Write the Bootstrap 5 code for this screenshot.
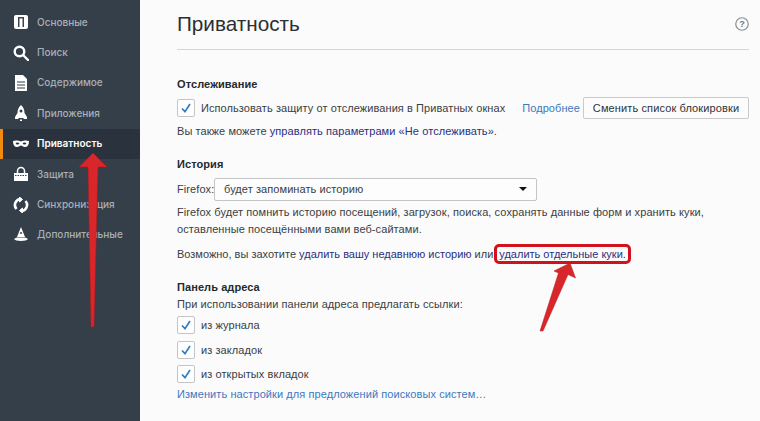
<!DOCTYPE html>
<html lang="ru">
  <head>
    <meta charset="UTF-8" />
    <meta name="viewport" content="width=device-width, initial-scale=1" />
    <title>Приватность</title>
    <link
      href="https://cdn.jsdelivr.net/npm/bootstrap@5.3.0/dist/css/bootstrap.min.css"
      rel="stylesheet"
    />
    <style>
      html, body { height: 421px; overflow: hidden; }
      body { background: #fbfbfc; color: #3a3e43; font-family: "Liberation Sans", Arial, sans-serif; font-size: 11px; letter-spacing: .08px; position: relative; white-space: nowrap; }
      .side-panel { width: 140px; height: 421px; background: #343f4a; padding-top: 7px; flex-shrink: 0; }
      .side-item { height: 30.4px; padding-left: 13px; gap: 8px; color: #a9afb5; font-family: Inter, sans-serif; font-size: 10px; font-weight: 500; letter-spacing: 0; }
      .side-item svg { width: 16px; height: 16px; flex-shrink: 0; }
      .side-item.is-active { background: #2a333d; color: #fff; font-weight: 600; border-left: 3px solid #f28a10; padding-left: 10px; }
      .main-pane { padding: 0 11px 0 37px; min-width: 0; }
      .page-head { height: 50px; padding-top: 9px; border-bottom: 1px solid #d5d6d8; }
      .page-head h1 { font-size: 20.7px; font-weight: 400; margin: 0; line-height: 30px; color: #2b2f33; letter-spacing: 0; }
      .help-mark { width: 14px; height: 14px; margin-top: 8px; }
      .sect-title { font-size: 11px; font-weight: 700; margin: 0; line-height: 16px; color: #26292d; }
      .track-gap { margin-top: 26px; }
      .history-gap { margin-top: 16.5px; }
      .addr-gap { margin-top: 15px; }
      .addr-intro { margin-top: 1px; }
      .line-row { line-height: 17px; }
      .tick-box { width: 18px; height: 18px; border: 1px solid #c4c5c7; border-radius: 2px; background: #fff; flex-shrink: 0; }
      .tick-box svg { width: 12px; height: 12px; }
      .tick-row { gap: 6px; height: 24.5px; }
      .track-row { margin-top: 4px; margin-bottom: 2px; }
      .more-link { color: #3b78c0; text-decoration: none; }
      .dark-link { color: #2a2f80; text-decoration: none; }
      .block-btn { font-size: 11px; letter-spacing: .12px; width: 166px; height: 22px; padding: 0; background: #fcfcfc; border: 1px solid #c9c9cb; border-radius: 2px; color: #2f3338; line-height: 20px; margin-left: -3px; flex-shrink: 0; }
      .select-row { margin-top: 5.5px; margin-bottom: 3px; }
      .select-label { width: 37px; }
      .hist-select { width: 323px; height: 23px; background: #fdfdfd; border: 1px solid #c4c5c7; border-radius: 2px; padding: 0 9px; }
      .caret-mark { width: 0; height: 0; border-left: 4px solid transparent; border-right: 4px solid transparent; border-top: 4px solid #111; }
      .cookie-line { margin-top: 6.5px; height: 20px; letter-spacing: 0; }
      .red-frame { border: 3px solid #d0121f; border-radius: 5px; padding: 0 2px; margin-left: 1px; line-height: 14px; }
      .change-link { margin-top: -1px; }
      .arrow-layer { position: absolute; left: 0; top: 0; width: 760px; height: 421px; pointer-events: none; }
    </style>
  </head>
  <body>
    <div class="d-flex">
      <nav class="side-panel">
        <div class="side-item d-flex align-items-center">
          <svg viewBox="0 0 16 16"><rect x="1" y="1" width="14" height="14" rx="2" fill="#fff"/><rect x="5" y="3" width="6" height="10" fill="#3b4550"/><rect x="6.500" y="4.500" width="3" height="8.500" fill="#fff"/></svg>
          <span>Основные</span>
        </div>
        <div class="side-item d-flex align-items-center">
          <svg viewBox="0 0 16 16" fill="none" stroke="#fff" stroke-width="2.400"><circle cx="6.500" cy="6.500" r="4.800"/><path d="M10 10l5 5" stroke-linecap="round"/></svg>
          <span>Поиск</span>
        </div>
        <div class="side-item d-flex align-items-center">
          <svg viewBox="0 0 16 16"><path d="M2 0h8l4 4v12H2z" fill="#fff"/><path d="M4 7h8M4 10h8M4 13h8" stroke="#343f4a" stroke-width="1.200"/></svg>
          <span>Содержимое</span>
        </div>
        <div class="side-item d-flex align-items-center">
          <svg viewBox="0 0 16 16"><path d="M8 0c2.500 2 3.500 5 3.500 8l2.500 4v2h-3l-1-1H6l-1 1H2v-2l2.500-4C4.500 5 5.500 2 8 0z" fill="#fff"/><circle cx="8" cy="6" r="1.500" fill="#343f4a"/><path d="M7 14.500h2V16H7z" fill="#fff"/></svg>
          <span>Приложения</span>
        </div>
        <div class="side-item is-active d-flex align-items-center">
          <svg viewBox="0 0 16 16"><path d="M0 5c3-1 5-.5 8 .5 3-1 5-1.500 8-.5 0 4-1.500 6-4 6-2 0-3-1.500-4-1.500S6 11 4 11C1.500 11 0 9 0 5z" fill="#fff"/><ellipse cx="4.500" cy="7.500" rx="1.800" ry="1.100" fill="#2a333d"/><ellipse cx="11.500" cy="7.500" rx="1.800" ry="1.100" fill="#2a333d"/></svg>
          <span>Приватность</span>
        </div>
        <div class="side-item d-flex align-items-center">
          <svg viewBox="0 0 16 16"><path d="M4.500 7V5a3.500 3.500 0 0 1 7 0v2" fill="none" stroke="#fff" stroke-width="1.500"/><path d="M1 7h14v8H1z" fill="#fff"/><path d="M2 9.500h12" stroke="#343f4a" stroke-width="1.200" stroke-dasharray="1.500 1"/></svg>
          <span>Защита</span>
        </div>
        <div class="side-item d-flex align-items-center">
          <svg viewBox="0 0 16 16" fill="none" stroke="#fff" stroke-width="2.600"><path d="M3.500 12A6 6 0 0 1 8 2M12.500 4A6 6 0 0 1 8 14"/><path d="M6.500 0v5l3-2.500zM9.500 16v-5l-3 2.500z" fill="#fff" stroke-width="1"/></svg>
          <span>Синхронизация</span>
        </div>
        <div class="side-item d-flex align-items-center">
          <svg viewBox="0 0 16 16"><path d="M8 0l4 10H4z" fill="#fff"/><circle cx="8" cy="6" r="1" fill="#343f4a"/><path d="M1 12c2-1.500 3-1.500 3-1.500h8s1 0 3 1.500c-1 2.500-13 2.500-14 0z" fill="#fff"/></svg>
          <span>Дополнительные</span>
        </div>
      </nav>

      <main class="main-pane flex-grow-1">
        <div class="page-head d-flex justify-content-between">
          <h1>Приватность</h1>
          <svg class="help-mark" viewBox="0 0 13 13"><circle cx="6.500" cy="6.500" r="5.800" fill="none" stroke="#8b8b8d" stroke-width="1.100"/><text x="6.500" y="9.500" text-anchor="middle" font-size="8.500" font-family="Liberation Sans" font-weight="700" fill="#77787a">?</text></svg>
        </div>

        <h2 class="sect-title track-gap">Отслеживание</h2>
        <div class="d-flex align-items-center tick-row track-row">
          <span class="tick-box d-flex align-items-center justify-content-center"><svg viewBox="0 0 12 12" fill="none" stroke="#2f7bc4" stroke-width="1.700"><path d="M2 6.500l3 3.200L10 2"/></svg></span>
          <span>Использовать защиту от отслеживания в Приватных окнах</span>
          <a class="more-link ms-auto" href="#">Подробнее</a>
          <button type="button" class="block-btn">Сменить список блокировки</button>
        </div>
        <div class="line-row">Вы также можете <a class="dark-link" href="#">управлять параметрами «Не отслеживать»</a>.</div>

        <h2 class="sect-title history-gap">История</h2>
        <div class="d-flex align-items-center select-row">
          <span class="select-label">Firefox:</span>
          <div class="hist-select d-flex align-items-center justify-content-between">
            <span>будет запоминать историю</span>
            <span class="caret-mark"></span>
          </div>
        </div>
        <div class="line-row">Firefox будет помнить историю посещений, загрузок, поиска, сохранять данные форм и хранить куки,<br />оставленные посещёнными вами веб-сайтами.</div>
        <div class="d-flex align-items-center cookie-line">
          <span>Возможно, вы захотите <a class="dark-link" href="#">удалить вашу недавнюю историю</a> или</span>
          <a class="dark-link red-frame" href="#">удалить отдельные куки.</a>
        </div>

        <h2 class="sect-title addr-gap">Панель адреса</h2>
        <div class="line-row addr-intro">При использовании панели адреса предлагать ссылки:</div>
        <div class="d-flex align-items-center tick-row">
          <span class="tick-box d-flex align-items-center justify-content-center"><svg viewBox="0 0 12 12" fill="none" stroke="#2f7bc4" stroke-width="1.700"><path d="M2 6.500l3 3.200L10 2"/></svg></span>
          <span>из журнала</span>
        </div>
        <div class="d-flex align-items-center tick-row">
          <span class="tick-box d-flex align-items-center justify-content-center"><svg viewBox="0 0 12 12" fill="none" stroke="#2f7bc4" stroke-width="1.700"><path d="M2 6.500l3 3.200L10 2"/></svg></span>
          <span>из закладок</span>
        </div>
        <div class="d-flex align-items-center tick-row">
          <span class="tick-box d-flex align-items-center justify-content-center"><svg viewBox="0 0 12 12" fill="none" stroke="#2f7bc4" stroke-width="1.700"><path d="M2 6.500l3 3.200L10 2"/></svg></span>
          <span>из открытых вкладок</span>
        </div>
        <a class="more-link line-row d-block change-link" href="#">Изменить настройки для предложений поисковых систем…</a>
      </main>
    </div>

    <!-- red annotation arrows drawn over the page -->
    <svg class="arrow-layer" viewBox="0 0 760 421">
      <path d="M93 153L107 167H98L94 327L91 327L88 167H79Z" fill="#d8262a" stroke="#b01a1e" stroke-width="0.500"/>
      <path d="M570 263L575.500 278L568 274.500L543 331L540 331L558.500 273L554 271Z" fill="#d8262a" stroke="#b01a1e" stroke-width="0.500"/>
    </svg>

    <script src="https://cdn.jsdelivr.net/npm/bootstrap@5.3.0/dist/js/bootstrap.bundle.min.js"></script>
  </body>
</html>
